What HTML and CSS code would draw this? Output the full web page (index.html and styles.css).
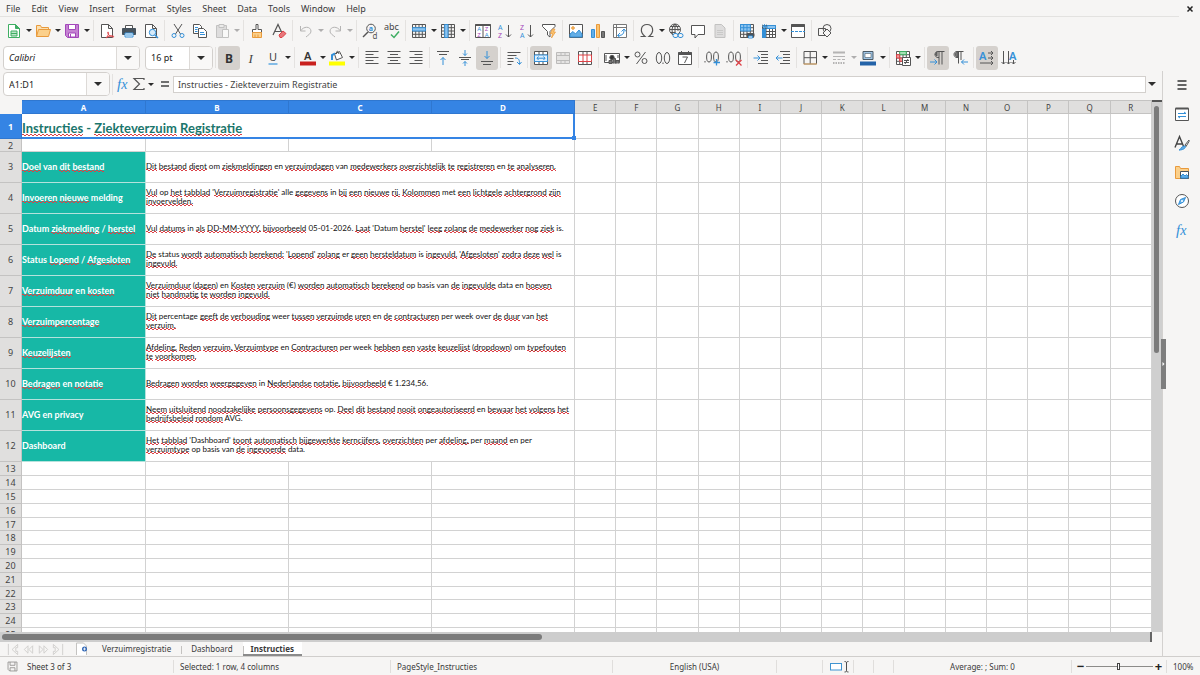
FILE: index.html
```html
<!DOCTYPE html>
<html lang="nl">
<head>
<meta charset="utf-8">
<title>Ziekteverzuim Registratie</title>
<link rel="stylesheet" href="styles.css">
</head>
<body>
<div class="app">
  <header class="top">
    <div class="menubar">
      <nav class="menus">
        <button>File</button><button>Edit</button><button>View</button><button>Insert</button><button>Format</button><button>Styles</button><button>Sheet</button><button>Data</button><button>Tools</button><button>Window</button><button>Help</button>
      </nav>
      <button class="close" aria-label="Close document"><svg viewBox="0 0 8 8"><path d="M1.5 1.5l5 5M6.500 1.500l-5 5"/></svg></button>
    </div>
    <div class="toolbar" id="standard"></div>
    <div class="toolbar">
      <div class="combo combo-font"><input aria-label="Font name" value="Calibri"><button aria-label="Font list"><i class="caret"></i></button></div>
      <div class="combo combo-size"><input aria-label="Font size" value="16 pt"><button aria-label="Size list"><i class="caret"></i></button></div>
      <span class="sep"></span>
      <div class="tools" id="formatting"></div>
    </div>
  </header>

  <div class="work">
    <main class="document">
      <div class="formulabar">
        <div class="combo combo-name"><input aria-label="Name box" value="A1:D1"><button aria-label="Names"><i class="caret"></i></button></div>
        <span class="sep"></span>
        <div class="tools" id="formula"></div>
        <input class="formula" aria-label="Input line" value="Instructies - Ziekteverzuim Registratie">
        <button class="expand" aria-label="Expand formula bar"><i class="caret"></i></button>
      </div>
      <div class="sheetarea">
        <div class="gridwrap">
          <table class="grid">
            <colgroup><col class="c-num"><col class="c-a"><col class="c-wide"><col class="c-wide"><col class="c-wide"><col span="14"></colgroup>
            <thead><tr id="heads"></tr></thead>
            <tbody id="cells"></tbody>
          </table>
        </div>
        <div class="vscroll"><span></span></div>
        <div class="hscroll"><span></span></div>
      </div>
      <div class="tabs">
        <div class="tabnav" id="tabnav"></div>
        <button class="addsheet" aria-label="Add sheet"><svg viewBox="0 0 16 14"><path d="M2.500 13V1h7l3 3v9" fill="#fff" stroke="#c4c3c1"/><circle cx="10.500" cy="7" r="2.500" fill="#2f66b5"/><path d="M9 7h3M10.500 5.500v3" stroke="#fff" stroke-width=".8"/></svg></button>
        <button class="tab">Verzuimregistratie</button>
        <button class="tab">Dashboard</button>
        <button class="tab active">Instructies</button>
      </div>
    </main>
    <aside class="sidebar" id="sidebar"><button class="splitter" aria-label="Hide sidebar"><svg viewBox="0 0 4 6"><path d="M1 1l2 2-2 2z"/></svg></button></aside>
  </div>

  <footer class="status">
    <div class="s-save"><svg viewBox="0 0 16 16"><path d="M2.500 2.500h11v11h-9l-2-2zM5 2.500v4h6v-4M5 13.500v-4h6v4" fill="none" stroke="#8c8b89"/></svg></div>
    <div>Sheet 3 of 3</div>
    <div>Selected: 1 row, 4 columns</div>
    <div>PageStyle_Instructies</div>
    <div class="center">English (USA)</div>
    <div></div>
    <div class="s-mode"><svg viewBox="0 0 20 12"><rect x="1.500" y="3" width="11" height="6.500" fill="#fff" stroke="#3f94d1"/><path d="M15.500 1c1.500 0 2 .5 2 1.500 0-1 .5-1.500 2-1.500M17.500 2v8M15.500 11.500c1.500 0 2-.5 2-1.500 0 1 .5 1.500 2 1.500" fill="none" stroke="#4d4d4d"/></svg></div>
    <div></div>
    <div></div>
    <div class="center">Average: ; Sum: 0</div>
    <div class="zoomer"><button aria-label="Zoom out">−</button><input type="range" min="0" max="100" value="48" aria-label="Zoom"><button aria-label="Zoom in">+</button></div>
    <div>100%</div>
  </footer>
</div>
<script src="app.js"></script>
</body>
</html>
```

FILE: styles.css
```css
* { box-sizing: border-box; }
body {
  margin: 0;
  font-family: "Noto Sans", sans-serif;
  font-size: 8px;
  color: #3a3a3a;
  background: #f6f5f4;
}
button, input { font: inherit; color: inherit; margin: 0; padding: 0; border: 0; background: none; }
svg { display: block; overflow: visible; }

.app { height: 100vh; display: flex; flex-direction: column; overflow: hidden; }
.top { flex: none; }

.menubar { height: 17px; display: flex; justify-content: space-between; }
.menus { flex: 1; display: flex; gap: 11px; padding-left: 6px; margin-right: 1px; border-bottom: 1px solid #e3e2e0; }
.menus button { font-size: 9px; line-height: 14px; padding-top: 2px; }
.close { width: 20px; display: grid; place-items: center; }
.close svg { width: 8px; height: 8px; stroke: #222; stroke-width: 1.5; }

.toolbar { height: 27px; display: flex; align-items: center; padding-left: 3px; }
.tools { display: flex; align-items: center; }
.tool { flex: none; width: 22px; height: 24px; display: grid; place-items: center; border-radius: 3px; }
.tool svg { width: 16px; height: 16px; fill: none; stroke: #555; stroke-width: 1; }
.tool.on { background: #d5d1cd; }
.tool.off { opacity: .4; }
.arrow { flex: none; width: 7px; height: 24px; display: grid; place-items: center; }
.arrow::after { content: ""; border: 3px solid transparent; border-top: 3px solid #2a2a2a; border-bottom: 0; }
.arrow.off { opacity: .35; }
.sep { flex: none; width: 1px; height: 21px; margin: 0 2px; background: #e4e2e0; }
.arrow + .sep { margin-left: 3px; }

.combo { display: flex; height: 24px; border: 1px solid #d3d0cd; border-radius: 4px; background: #fff; overflow: hidden; flex: none; }
.combo input { flex: 1; min-width: 0; padding-left: 5px; color: #222; font-size: 9px; }
.combo button { width: 23px; display: grid; place-items: center; border-left: 1px solid #dddad7; background: #f9f8f7; }
.combo-font { width: 137px; margin-right: 5px; }
.combo-font input { font-style: italic; }
.combo-size { width: 68px; }
.combo-name { width: 107px; }
.caret { border: 4px solid transparent; border-top: 4px solid #2e2e2e; border-bottom: 0; }

.work { flex: 1; min-height: 0; display: flex; }
.document { flex: 1; min-width: 0; display: flex; flex-direction: column; }
.formulabar { height: 29px; display: flex; align-items: center; padding: 0 4px 3px 3px; }
.formulabar .tool { width: 16px; }
.formulabar .arrow { margin-right: 3px; }
.formula { flex: 1; min-width: 0; height: 17px; padding: 0 4px; border: 1px solid #d3d0cd; background: #fff; color: #444; font-size: 9px; }
.expand { width: 12px; height: 17px; display: grid; place-items: center; }

.sheetarea { flex: 1; min-height: 0; display: grid; grid-template-columns: minmax(0, 1fr) 10px; grid-template-rows: minmax(0, 1fr) 10px; }
.gridwrap { overflow: hidden; background: #fff; }
.grid { width: 100%; table-layout: fixed; border-collapse: separate; border-spacing: 0; font-family: Lato, sans-serif; font-size: 8px; line-height: 9px; color: #111; }
.c-num { width: 22px; }
.c-a { width: 124px; }
.c-wide { width: 143px; }
.grid th, .grid td { padding: 0; height: 100%; border-right: 1px solid #d2d2d2; border-bottom: 1px solid #d2d2d2; white-space: nowrap; }
.grid th { background: #e0dfde; border-color: #c4c3c2; font-family: "Noto Sans", sans-serif; font-size: 9px; font-weight: 400; color: #444; text-align: center; }
.grid thead th { height: 14px; border-top: 1px solid #c4c3c2; font-size: 8px; }
.grid thead th:first-child { background: #f6f5f4; border-color: #f6f5f4; }
.grid tr th.picked { background: #3584e4; border-color: #2f77d0; color: #fff; font-weight: 700; }
.grid tbody tr { height: 14px; }
.grid tbody tr:nth-child(5n+2) { height: 13px; }
.grid tbody tr.title { height: 25px; }
.grid tbody tr.item { height: 31px; }
.grid .item th, .grid .item td { padding-bottom: 2px; }
.grid td.heading { position: relative; padding: 5px 0 0; border-right: 2px solid #3584e4; border-bottom: 2px solid #3584e4; font-size: 13px; line-height: 16px; font-weight: 700; color: #1b766c; }
.grid td.heading::after { content: ""; position: absolute; right: -3px; bottom: -3px; width: 4px; height: 4px; background: #3584e4; }
.grid td.label { background: #17b8a6; border-color: #b5e2dc; color: #fff; font-weight: 700; font-size: 9px; }
/* two offset rows of dashes form the spelling zigzag */
.grid u {
  text-decoration: none;
  background-image: linear-gradient(90deg, #dc4046 50%, transparent 50%), linear-gradient(90deg, transparent 50%, #dc4046 50%);
  background-size: 4px 1px;
  background-repeat: repeat-x;
  background-position: left 0 bottom 1px, left 0 bottom 0;
}

.vscroll { background: #cfcfcf; padding: 4px 3px 0 2px; border-top: 2px solid #555; }
.vscroll span { display: block; width: 5px; height: 47%; border-radius: 3px; background: #7b7b7b; }
.hscroll { background: #cdcdcd; padding: 2px 0 0 2px; border-right: 2px solid #666; }
.hscroll span { display: block; width: 47%; height: 6px; border-radius: 3px; background: #7b7b7b; }

.tabs { flex: none; height: 15px; display: flex; border-bottom: 1px solid #d0cecc; }
.tabnav { display: flex; gap: 1px; padding: 1px 0 0 6px; }
.tabnav svg { width: 14px; height: 13px; fill: none; stroke: #cfcecc; }
.addsheet { margin: 0 2px 0 9px; }
.addsheet svg { width: 16px; height: 14px; }
.tab { position: relative; padding: 0 10px; line-height: 14px; }
.tab + .tab::before { content: ""; position: absolute; left: 0; top: 4px; height: 8px; border-left: 1px solid #c4c2c0; }
.tab.active { background: #fff; font-weight: 700; box-shadow: inset 0 -2px #8b8b8b; padding: 0 8px; }

.sidebar { flex: none; position: relative; width: 38px; display: flex; flex-direction: column; align-items: center; padding-top: 2px; border-left: 1px solid #d3d1cf; border-bottom: 1px solid #d0cecc; gap: 5px; }
.splitter { position: absolute; left: -2px; top: 50%; width: 5px; height: 50px; margin-top: -25px; background: #7e7e7e; }
.splitter svg { width: 5px; height: 6px; fill: #fff; }

.status { flex: none; height: 18px; display: grid; grid-template-columns: 21px 153px 217px 222px 164px 46px 31px 20px 20px 1fr 95px 33px; align-items: center; line-height: 14px; }
.status > div { height: 13px; padding-left: 6px; border-right: 1px solid #e0dedc; }
.status > div:last-child { border: 0; }
.status .center { text-align: center; padding: 0; }
.status .s-save svg { width: 13px; height: 13px; }
.status .s-save { border: 0; }
.status .s-mode svg { width: 20px; height: 13px; }
.status .zoomer { display: flex; align-items: center; gap: 1px; padding: 0 3px 0 4px; }
.zoomer button { width: 9px; font-size: 13px; line-height: 13px; font-weight: 700; color: #222; }
.zoomer input { appearance: none; flex: 1; min-width: 0; height: 12px; }
.zoomer input::-webkit-slider-runnable-track { height: 1px; background: #8c8b89; }
.zoomer input::-webkit-slider-thumb { appearance: none; width: 3px; height: 7px; margin-top: -3px; border: 1px solid #444; background: #fff; }
```

FILE: app.js
```js
const B = '#3490d8', P = '#a347ba', O = '#e99a3c', R = '#dd4247', G = '#3fae63';
const p = (d, s = '', f = '', w = '') => `<path d="${d}"${s && ` stroke="${s}"`}${f && ` fill="${f}"`}${w && ` stroke-width="${w}"`}/>`;
const t = (x, y, size, text, fill = '#555', extra = '') => `<text x="${x}" y="${y}" font-size="${size}" fill="${fill}" stroke="none" ${extra}>${text}</text>`;
const page = 'M2.500 1.500h7l4 4v9h-11zM9.500 1.500v4h4';
const grid = 'M1.500 1.500h13v13h-13zM1.500 4.700h13M1.500 8h13M1.500 11.300h13M4.700 1.500v13M8 1.500v13M11.300 1.500v13';

const icons = {
  new: p('M2.500 1.500h7l4 4v9h-11z', G, '#fff') + p('M9.500 1.500v4h4z', G, G) + p('M5 8h6v5H5zM5 10.500h6', G, '#bfe6cb'),
  open: p('M1.500 13.500v-11h4l1 2h7v3', O, '#fbe0b0') + p('M1.500 13.500l2-7h12l-2 7z', O, '#fbd08b'),
  save: p('M1.500 1.500h13v13h-11l-2-2z', P, '#c583d2') + p('M4.500 1.500h7v5h-7z', P, '#fff') + p('M4.500 14v-4h7v4z', P, '#fff') + p('M6.500 11v3', P),
  pdf: p(page, '', '#fff') + p('M7 15c3-3 3-6 2-6s0 4 5 5c2 0 0-2-3-1s-4 2-4 2', R),
  print: p('M4.500 5V2.500h7V5', '', '#fff') + p('M1.500 5.500h13v6h-13z', '#46525c', '#46525c') + p('M4 10h8v4H4z', B, '#fff') + p('M5 12h6', B),
  preview: p(page, '', '#fff') + '<circle cx="9.500" cy="9.500" r="3.200" fill="#d7ebfa" stroke="#3490d8"/>' + p('M12 12l3 3', B, '', '1.500'),
  cut: p('M4 1l6.500 10M12 1L5.500 11') + '<circle cx="4" cy="12.500" r="2" stroke="#3490d8"/><circle cx="12" cy="12.500" r="2" stroke="#3490d8"/>',
  copy: p('M1.500 1.500h6l2 2v7h-8z', '', '#fff') + p('M6.500 5.500h5l3 3v6h-8z', '', '#fff') + p('M3 4.500h3M3 6.500h2.500M3 8.500h2.500M8 9.500h4M8 11.500h5', B),
  paste: p('M2.500 2.500h10v12h-10z', '#777', '#bbb') + p('M5 1.500h5v3H5z', '#777', '#ddd') + p('M8.500 6.500h6v8h-6z', '#777', '#fff'),
  brush: p('M7 1.500h2v5h3.500v3h-9v-3H7z', '', '#fff') + p('M3.500 9.500h9v5h-9z', O, '#fbd08b') + p('M6 11.500v3M9 11.500v3', O),
  clear: p('M2 12L7 1.500 11 10M3.500 8.500h6', '', '', '1.200') + p('M8 12l4-4 3 2.500-4 4h-2z', R, '#e8777b'),
  undo: p('M2.500 3v5h5M2.500 8c3-5 10-5 10.500 0 0 3-3 4-5 6'),
  redo: p('M13.500 3v5h-5M13.500 8C10.500 3 3.500 3 3 8c0 3 3 4 5 6'),
  find: '<circle cx="9" cy="5.500" r="4.300"/>' + p('M6 9l-5 5', '', '', '1.500') + t(6.8, 8, 7, 'a', B, 'font-weight="700"') + t(10.5, 15.5, 8, 'd'),
  spell: t(0, 7, 9, 'abc', '#444') + p('M7 11.500l3 3L15 8.500', G, '', '1.500'),
  row: p(grid) + p('M1.500 4.700h13V8h-13z', B, '#8dc4ef'),
  col: p(grid) + p('M4.700 1.500H8v13H4.700z', B, '#8dc4ef'),
  sort: p('M.5 1.500h15v13H.5zM8 2v12.500', '', '#fff') + p('M.5 2h15', '', '', '2') + t(2.300, 8.400, 6, 'A', B) + t(2.300, 14, 6, 'Z', P) + t(9.800, 8.400, 6, 'Z', P) + t(9.800, 14, 6, 'A', B),
  asc: t(1, 6.5, 7, 'A', B) + t(1, 15, 7, 'Z', P) + p('M11.500 2v12M9 11.500l2.500 2.500 2.500-2.500'),
  desc: t(1, 6.5, 7, 'Z', P) + t(1, 15, 7, 'A', B) + p('M11.500 2v12M9 11.500l2.500 2.500 2.500-2.500'),
  filter: p('M1.500 1.500h12.500v2L9 8.500V14l-2.500-2V8.500l-5-5z', '', '#fff') + p('M11.500 6L9.500 10.500h2L10.500 15l4-6h-2L14 6z', O, '#fbc46f', '.7'),
  image: p('M1.500 1.500h13v13h-13z', '', '#fff') + p('M2 14v-3l3-2.500 2.500 2.500L11 7l3 4v3z', B, '#63aee6') + '<circle cx="5" cy="5" r="1.300" fill="#fbc46f" stroke="#e99a3c"/>',
  chart: p('M1.500 6.500h3v8h-3z', B, '#63aee6') + p('M6.500 1.500h3v13h-3z', O, '#fbc46f') + p('M11.500 8.500h3v6h-3z', '', '#777'),
  pivot: p('M1.500 1.500h13v13h-13zM1.500 4.500h13M4.500 1.500v13', '#777', '#fff') + p('M6 12.500c5 0 6-2 6-6M9.500 8.500L12 6l2 2.500M8 10l-2.500 2.500L8 14.500', B),
  omega: p('M1.500 13.500h4.500c-6-5-4-12 2-12s8 7 2 12h4.500', '', '', '1.200'),
  link: '<circle cx="7" cy="6.500" r="5.500"/>' + p('M1.500 6.500h11M7 1v11M2.500 3.500h9M2.500 9.500h5M7 1C3 4 4 9 5 12M7 1c3 3 3 5 3 7') + '<rect x="5" y="10.500" width="5" height="4" rx="2" fill="#f6f5f4" stroke="#3490d8"/><rect x="10" y="10.500" width="5" height="4" rx="2" stroke="#3490d8"/>',
  comment: p('M1.500 2.500h13v9H8l-3 3.500v-3.500H1.500z', '', '#fff'),
  header: p('M3 1.500h6.500l3.500 3.500v9.500H3z', '#777', '#bbb') + p('M5 7.500h6M5 9.500h6M5 11.500h6', '#888'),
  prange: p(grid) + p('M1.500 1.500h9.800V8H1.500z', B, '#8dc4ef') + p('M1.500 4.700h9.800M4.700 1.500V8M8 1.500V8', B) + p('M8 10.500h7v3H8z', '', '#46525c') + p('M9.500 13h4v2h-4z', B, '#fff'),
  freeze: p('M1.500 2.500h13v12h-13zM1.500 5.500h13M1.500 8.500h13M1.500 11.500h13M5 2.500v12M8.500 2.500v12M11.500 2.500v12', '', '#fff') + p('M1.500 6h3v8.500h-3z', B, '#3490d8') + p('M6 2.500h8.500v3H6z', B, '#8dc4ef') + p('M1 3.500h5M3.500 1v5M1.500 1.500l4 4M5.500 1.500l-4 4', B, '', '.8'),
  split: p('M1.500 1.500h13v13h-13z', '', '#fff') + p('M1.500 2.500h13', '', '', '3') + '<path d="M1 8.500h14" stroke="#3490d8" stroke-dasharray="3 1"/>',
  shapes: '<circle cx="10" cy="5.500" r="4"/>' + p('M1.500 5.500h7v7h-7z') + p('M10 6l4 4-4 4-4-4z', '', '#f6f5f4'),
  bold: t(4, 12.500, 12, 'B', '#333', 'font-weight="700"'),
  italic: t(5.5, 12.500, 13, 'I', '#444', 'font-style="italic" font-family="Liberation Serif"'),
  under: t(4, 11, 11, 'U', '#444') + p('M3.500 14h9', '#5ea9e2', '', '1.500'),
  color: t(4, 9.500, 11, 'A', '#333', 'font-weight="600"') + p('M0 13.500h16', '#c9211e', '', '4'),
  fill: p('M0 13.500h16', '#ffff00', '', '4') + p('M5.500 4l5-2.500 3 6-6 2.500zM10 4c-1-4-3-3-2.500 0', '', '#fff') + p('M3 10V5l3-1.500', B, '', '2'),
  left: p('M1.500 1.500h13M1.500 4.500h8M1.500 7.500h13M1.500 10.500h8M1.500 13.500h13'),
  centre: p('M1.500 1.500h13M4 4.500h8M1.500 7.500h13M4 10.500h8M1.500 13.500h13'),
  right: p('M1.500 1.500h13M6.500 4.500h8M1.500 7.500h13M6.500 10.500h8M1.500 13.500h13'),
  vtop: p('M2 1.500h12M4 4.500h8') + p('M8 15V7.500M5.500 10L8 7.500l2.500 2.500', B),
  vmid: p('M2 7.500h12M4 9.500h8') + p('M8 0v5.500M6 3.500l2 2 2-2M8 16v-4.500M6 13.500l2-2 2 2', B),
  vbot: p('M2 11.500h12M4 14.500h8') + p('M8 1v7.500M5.500 6L8 8.500 10.500 6', B),
  wrap: p('M1.500 2.500h13M1.500 5.500h9M1.500 8.500h6M1.500 11.500h6M1.500 14.500h4') + p('M9 8c4 0 4.500 2 4.500 6M11 12l2.500 2.500L15.500 12', B),
  mergec: p('M1.500 1.500h13v13h-13zM1.500 5h13M1.500 11.500h13M6 1.500V5M10 1.500V5M6 11.500v3M10 11.500v3', '', '#fff') + p('M1.500 5h13v6.500h-13z', B, '#dcefff') + p('M4 8.200h8M5.500 6.500L4 8.200 5.500 10M10.500 6.500L12 8.200 10.500 10', B),
  merge: p('M1.500 2.500h13v11h-13zM1.500 5.500h13M1.500 10.500h13M6 2.500v3M10 2.500v3M6 10.500v3M10 10.500v3', '#666', '#ccc'),
  unmerge: p('M1.500 1.500h13v13h-13zM6 1.500v13M10 1.500v13', '', '#fff') + p('M1.500 5h13v6.500h-13zM6 5v6.500M10 5v6.500', R, '#fff'),
  money: p('M.5 3.500h15v9H.5z', '', '#fff') + '<circle cx="8" cy="7.500" r="2.200" fill="#333"/>' + p('M2 5v6M14 5v3M5 13.500v-3h3v3zM9 13.500v-5h2.500v5M12 13.500v-3h3v3', '', '#777'),
  percent: '<circle cx="4.500" cy="4.500" r="2.500"/><circle cx="11.500" cy="11" r="2.500"/>' + p('M12.500 2l-9 12'),
  number: '<ellipse cx="4" cy="8" rx="2.700" ry="5.500"/><ellipse cx="12" cy="8" rx="2.700" ry="5.500"/>' + p('M8 12.500v1.500'),
  date: p('M1.500 2.500h13v12h-13z', '', '#fff') + p('M1.500 3.500h13', '', '', '3') + p('M4.500 1v3M11.500 1v3M5.500 7h5l-3 6'),
  adddec: '<ellipse cx="5" cy="7" rx="2.400" ry="5"/><ellipse cx="12" cy="7" rx="2.400" ry="5"/>' + p('M1 11v1.500') + p('M12.500 9v6.500M9.500 12.500H16', B, '', '1.300'),
  remdec: '<ellipse cx="5" cy="7" rx="2.400" ry="5"/><ellipse cx="12" cy="7" rx="2.400" ry="5"/>' + p('M1 11v1.500') + p('M10 10l5.500 5.500M15.500 10L10 15.500', R, '', '1.300'),
  indent: p('M5 1.500h10M8 4.500h7M8 7.500h7M8 10.500h7M5 13.500h10') + p('M.5 8H7M4.500 5.500L7 8l-2.500 2.500', B),
  outdent: p('M5 1.500h10M8 4.500h7M8 7.500h7M8 10.500h7M5 13.500h10') + p('M1 8h6.500M3.500 5.500L1 8l2.500 2.500', B),
  borders: p('M2 1.500h12.500v12.500H2zM8.200 1.500V14M2 7.700h12.500') + p('M1.500 14H15', '#edb56c'),
  lines: p('M2 2.500h12', '', '', '2') + p('M2 6.500h12') + '<path d="M2 9.500h12" stroke-dasharray="3 1.500"/><path d="M2 13h12" stroke-dasharray="1.500 1" stroke-width="2"/>',
  bcolor: p('M3 1.500h10v8H3z', '#4b5a66', '#9fc5e6') + p('M5 3.500h6v4H5z', '#4b5a66', '#fff', '.6') + p('M0 13.500h16', '#2463a8', '', '4'),
  cond: p(grid, '', '#fff') + p('M4.700 1.500h6.600v3.200H4.700z', G, '#a5e0b4') + p('M1.500 4.700h3.200V8H1.500z', R, '#ef9a9c') + p('M4.700 8h3.300v3.300H4.700z', R, '#ef9a9c') + p('M7.500 7.500h8v8h-8z', '', '#fff') + p('M9 10.500h5M9 12.500h5M13 9l-3 5'),
  ltr: p('M14.500 1.500H8c-4 0-4 6 0 6h1M9 1.500v13M12 1.500v13') + p('M6 4c-1 0-1 1 1 2V2C6 2 6 3 6 4', '', '#777') + p('M0 12h7M4.500 9.500L7 12l-2.500 2.500', B),
  rtl: p('M11.500 1.500H5c-4 0-4 6 0 6h1M6.500 1.500v12M9 1.500V10') + p('M3 4c0 2 1 3 3 3V2C4 2 3 3 3 4', '', '#777') + p('M16 12H9.500M12 9.500L9.500 12l2.500 2.500', B),
  hdir: t(0, 9.500, 11, 'A', B, 'font-weight="600"') + p('M9 3h5M12 1l2 2-2 2M9 8h5M12 6l2 2-2 2M1 13h13M12 11l2 2-2 2'),
  vdir: t(8, 9.500, 11, 'A', B, 'font-weight="600"') + p('M2.500 1v13M.5 12l2 2 2-2M7.500 1v13M5.500 12l2 2 2-2M12.500 10v4M10.500 12l2 2 2-2'),
  fx: t(2, 12.500, 15, 'f<tspan font-size="14">x</tspan>', B, 'font-style="italic" font-family="Liberation Serif"'),
  sum: p('M13 4V2.500H3L8.500 8 3 13.500h10V12', '', '', '1.200'),
  equal: p('M4 6h8M4 10h8', '#444', '', '1.700'),
  menu: p('M3.500 4h9M3.500 8h9M3.500 12h9', '#333', '', '1.500'),
  props: p('M1.500 2.500h13v12h-13z', '', '#fff') + p('M1.500 2.500h13', '', '', '2') + p('M4 7.500h8M10 6l2 1.500M4 10.500h8M4 10.500l2 1.500', B),
  styles: p('M1 12.500L5.500 1.500 10 12.500M2.500 9h6', '#444', '', '1.400') + p('M15 5l-4 5 1 1.500 3-5z', '', '#fff') + p('M5 15c2 0 2-4 5.500-4 2 0 1 4-5.500 4', B, '#63aee6'),
  gallery: p('M1.500 14.500v-12h4l1 2h8v10z', O, '#fbd08b') + p('M6.500 7.500h8v7h-8z', '#46525c', '#fff') + p('M7 14v-2l2-2 2 2 1.500-1.500L14 12v2z', B, '#63aee6'),
  navigator: '<circle cx="8" cy="8" r="6.500" fill="#fff"/>' + p('M11.500 4.500L9.500 9 4.500 11.500 6.500 6.500z', B, '#63aee6') + '<circle cx="8" cy="8" r="1" fill="#fff" stroke="none"/>',
  first: p('M2 1v12M12 1.500L6 7l6 5.500V9H10V5h2z'),
  prev: p('M7 3L3 7l4 4zM12 3L8 7l4 4z'),
  next: p('M3 3l4 4-4 4zM8 3l4 4-4 4z'),
  last: p('M12 1v12M2 1.500L8 7l-6 5.500V9h2V5H2z')
};

const svg = (name, size = 16) => `<svg viewBox="0 0 ${size} ${size}">${icons[name]}</svg>`;

// "|" separates groups; suffixes: ">" drop-down arrow, "!" pressed, "-" disabled
function tools(id, list) {
  document.getElementById(id).insertAdjacentHTML('beforeend', list.split(' ').map(item => {
    if (item === '|') return '<span class="sep"></span>';
    const name = item.match(/^\w+/)[0];
    const state = item.includes('!') ? ' on' : item.includes('-') ? ' off' : '';
    const arrow = item.includes('>') ? `<button class="arrow${state}" aria-label="${name} options"></button>` : '';
    return `<button class="tool${state}" aria-label="${name}">${svg(name)}</button>${arrow}`;
  }).join(''));
}

tools('standard', 'new> open> save> | pdf print preview | cut copy paste-> | brush clear | undo-> redo-> | find spell | row> col> | sort asc desc filter | image chart pivot | omega> link comment header- | prange freeze> split | shapes');
tools('formatting', 'bold! italic under> | color> fill> | left centre right | vtop vmid vbot! | wrap | mergec! merge- unmerge | money> percent number date | adddec remdec | indent outdent | borders> lines-> bcolor> | cond> | ltr! rtl | hdir! vdir');
tools('formula', 'fx sum> equal');
tools('sidebar', 'menu props styles gallery navigator fx');
document.getElementById('tabnav').innerHTML = ['first', 'prev', 'next', 'last'].map(n => svg(n, 14)).join('');

// "~" marks a word flagged by the spelling checker
const mark = s => s.replace(/~([\w.,:-]+)/g, '<u>$1</u>').replace(/\n/g, '<br>');
const items = [
  ['~Doel van ~dit ~bestand', '~Dit ~bestand ~dient om ~ziekmeldingen en ~verzuimdagen van ~medewerkers ~overzichtelijk ~te ~registreren en ~te ~analyseren.'],
  ['~Invoeren ~nieuwe melding', "~Vul op ~het ~tabblad '~Verzuimregistratie' alle ~gegevens in ~bij ~een ~nieuwe ~rij. ~Kolommen met ~een ~lichtgele ~achtergrond ~zijn\n~invoervelden."],
  ['Datum ~ziekmelding / ~herstel', "~Vul ~datums in ~als ~DD-MM-YYYY, ~bijvoorbeeld 05-01-2026. ~Laat 'Datum ~herstel' ~leeg ~zolang ~de ~medewerker ~nog ~ziek is."],
  ['Status ~Lopend / ~Afgesloten', "~De status ~wordt ~automatisch ~berekend: '~Lopend' ~zolang er ~geen ~hersteldatum is ~ingevuld, '~Afgesloten' ~zodra ~deze ~wel is\n~ingevuld."],
  ['~Verzuimduur en ~kosten', '~Verzuimduur (~dagen) en ~Kosten ~verzuim (€) ~worden ~automatisch ~berekend op basis van ~de ~ingevulde data en ~hoeven\n~niet ~handmatig ~te ~worden ~ingevuld.'],
  ['~Verzuimpercentage', '~Dit percentage ~geeft ~de ~verhouding weer ~tussen ~verzuimde ~uren en ~de ~contracturen per week over ~de ~duur van ~het\n~verzuim.'],
  ['~Keuzelijsten', '~Afdeling, ~Reden ~verzuim, ~Verzuimtype en ~Contracturen per week ~hebben ~een ~vaste ~keuzelijst (~dropdown) om ~typefouten\n~te ~voorkomen.'],
  ['~Bedragen en ~notatie', '~Bedragen ~worden ~weergegeven in ~Nederlandse ~notatie, ~bijvoorbeeld € 1.234,56.'],
  ['AVG en privacy', '~Neem ~uitsluitend ~noodzakelijke ~persoonsgegevens op. ~Deel ~dit ~bestand ~nooit ~ongeautoriseerd en ~bewaar ~het ~volgens ~het\n~bedrijfsbeleid ~rondom AVG.'],
  ['Dashboard', "~Het ~tabblad 'Dashboard' ~toont ~automatisch ~bijgewerkte ~kerncijfers, ~overzichten per ~afdeling, per ~maand en per\n~verzuimtype op basis van ~de ~ingevoerde data."]
];
const blanks = n => '<td></td>'.repeat(n);

document.getElementById('heads').innerHTML = '<th></th>' + [...'ABCDEFGHIJKLMNOPQR'].map((c, i) => `<th scope="col"${i < 4 ? ' class="picked"' : ''}>${c}</th>`).join('');
let rows = `<tr class="title"><th class="picked">1</th><td class="heading" colspan="4">${mark('~Instructies - ~Ziekteverzuim ~Registratie')}</td>${blanks(14)}</tr>`;
rows += `<tr><th>2</th>${blanks(18)}</tr>`;
items.forEach(([label, text], i) => {
  rows += `<tr class="item"><th>${i + 3}</th><td class="label">${mark(label)}</td><td class="text" colspan="3">${mark(text)}</td>${blanks(14)}</tr>`;
});
for (let n = 13; n <= 25; n++) rows += `<tr><th>${n}</th>${blanks(18)}</tr>`;
document.getElementById('cells').innerHTML = rows;
```
